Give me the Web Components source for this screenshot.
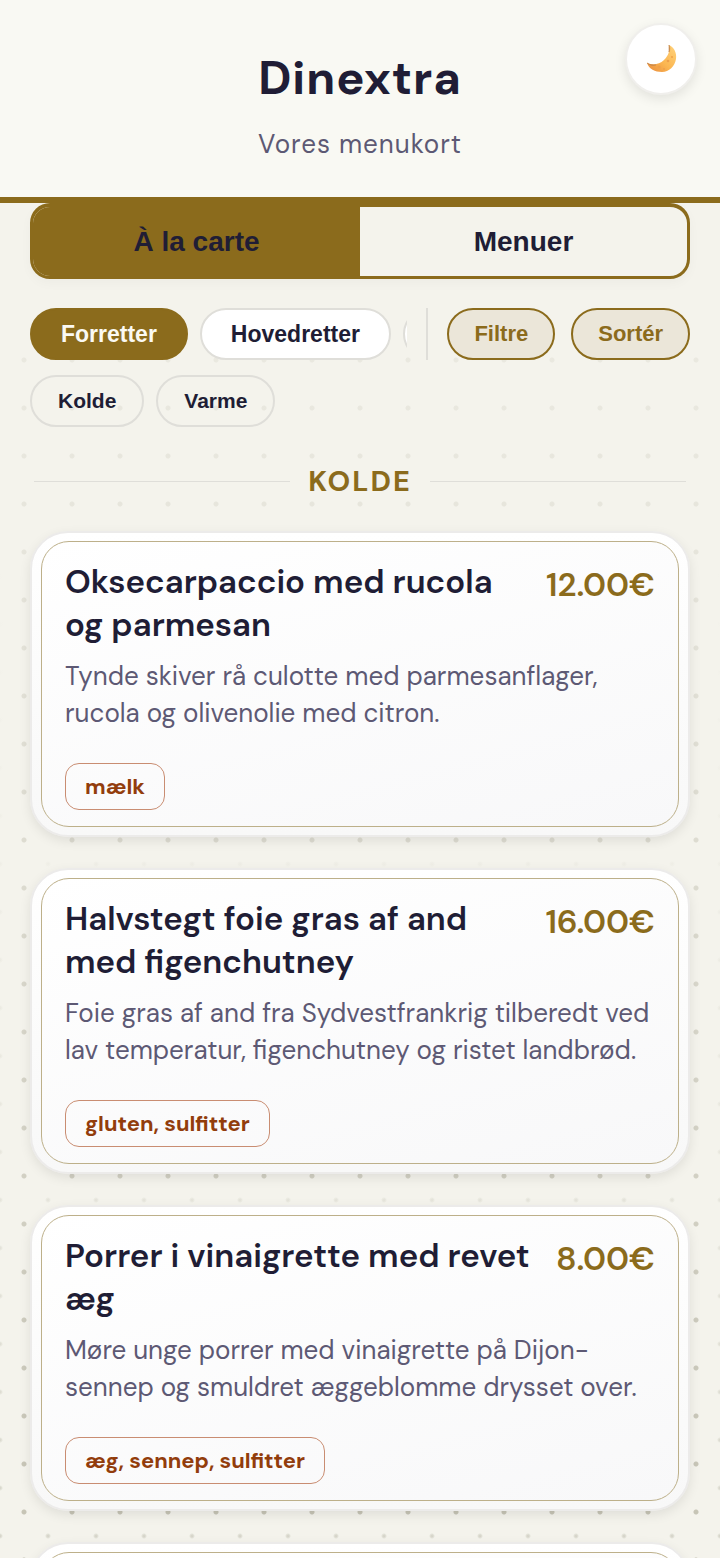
<!DOCTYPE html>
<html lang="da">
<head>
<meta charset="utf-8">
<meta name="viewport" content="width=device-width, initial-scale=1">
<title>Dinextra</title>
<style>
    :root {
        --gold: #8b6b1c;
        --ink: #201d35;
        --muted: #5d5974;
        --paper: #f4f3ec;
        --line: #dfded9;
        --ui: "Liberation Sans", Arial, sans-serif;
    }

    body {
        margin: 0;
        height: 100vh;
        overflow: hidden;
        color: var(--ink);
        background:
            linear-gradient(#f4f3ecee, #f4f3ecaa 40%, #f4f3ec00),
            radial-gradient(circle, #c5c3b4 2px, transparent 3px) 0 0 / 48px 48px,
            linear-gradient(#f4f3ec 35%, #f4f3ec00),
            radial-gradient(circle, #d6d5ca 1px, transparent 3px) 24px 24px / 48px 48px,
            var(--paper);
        font-family: "DM Sans", Inter, sans-serif;
    }
</style>
</head>
<body>

<dx-header name="Dinextra" subtitle="Vores menukort"></dx-header>
<dx-page>
    <dx-tabs slot="bar"></dx-tabs>
    <dx-filters slot="bar"></dx-filters>
    <dx-section name="Kolde">
        <dx-dish name="Oksecarpaccio med rucola og parmesan" price="12.00€" allergens="mælk">Tynde skiver rå culotte med parmesanflager, rucola og olivenolie med citron.</dx-dish>
        <dx-dish name="Halvstegt foie gras af and med figenchutney" price="16.00€" allergens="gluten, sulfitter">Foie gras af and fra Sydvestfrankrig tilberedt ved lav temperatur, figenchutney og ristet landbrød.</dx-dish>
        <dx-dish name="Porrer i vinaigrette med revet æg" price="8.00€" allergens="æg, sennep, sulfitter">Møre unge porrer med vinaigrette på Dijon-sennep og smuldret æggeblomme drysset over.</dx-dish>
        <dx-dish></dx-dish>
    </dx-section>
</dx-page>

<script>
class DXHeader extends HTMLElement {

    constructor() {
        super();
        this.attachShadow({ mode: "open" });
    }

    connectedCallback() {
        const styles = `
            :host {
            display: block;
            position: relative;
            padding: 48px 24px 35px;
            background: #f9f9f3;
            border-bottom: 6px solid var(--gold);
            text-align: center;
            }

            h1 {
            margin: 0;
            font-size: 47px;
            line-height: 60px;
            font-weight: 700;
            letter-spacing: 1px;
            }

            p {
            margin: 18px 0 0;
            font-size: 26px;
            line-height: 36px;
            letter-spacing: 1px;
            color: var(--muted);
            }

            button {
            position: absolute;
            top: 23px;
            right: 23px;
            width: 72px;
            height: 72px;
            padding: 0;
            display: grid;
            place-items: center;
            border: 2px solid #f0efec;
            border-radius: 50%;
            background: #fff;
            box-shadow: 0 4px 12px #00000018;
            }

            svg {
            width: 32px;
            height: 32px;
            }
      `;

        const template = `
            <h1>${this.getAttribute("name")}</h1>
            <p>${this.getAttribute("subtitle")}</p>
            <button type="button" aria-label="Mørkt tema">
                <svg viewBox="0 0 32 32">
                    <defs>
                        <linearGradient id="moon" x1="0" y1="1" x2="1" y2="0">
                            <stop offset="0" stop-color="#e88a3c"/>
                            <stop offset=".45" stop-color="#fbb651"/>
                            <stop offset="1" stop-color="#ffd37c"/>
                        </linearGradient>
                    </defs>
                    <path d="M24 2C29 4 32 10 31 16C30 23 24 29 17 29C10 29 4 26 2 20C7 22 14 22 19 17C24 12 25 7 24 2Z" fill="url(#moon)"/>
                    <path d="M24 2C25 4 25 7 24 9Z M2 20C5 22 8 22 11 22C7 23 4 22 2 20Z" fill="#b47a43" stroke="#c98a4c" stroke-width=".6"/>
                    <g fill="#eea04a">
                        <circle cx="14" cy="24" r="1.5"/>
                        <circle cx="19" cy="26" r="1"/>
                        <circle cx="23" cy="18" r="1.3"/>
                        <circle cx="27" cy="14" r="1"/>
                    </g>
                </svg>
            </button>
      `;

        this.shadowRoot.innerHTML = `
        <style>${styles}</style>
        ${template}
      `;
    }
}
customElements.define("dx-header", DXHeader);

class DXPage extends HTMLElement {

    constructor() {
        super();
        this.attachShadow({ mode: "open" });
    }

    connectedCallback() {
        this.shadowRoot.innerHTML = `
        <style>
            :host {
            display: block;
            }

            .bar {
            padding: 0 30px;
            background: linear-gradient(var(--paper) 148px, transparent 148px);
            }

            main {
            padding: 0 30px;
            }
        </style>
        <div class="bar"><slot name="bar"></slot></div>
        <main><slot></slot></main>
      `;
    }
}
customElements.define("dx-page", DXPage);

class DXTabs extends HTMLElement {

    constructor() {
        super();
        this.attachShadow({ mode: "open" });
    }

    connectedCallback() {
        this.shadowRoot.innerHTML = `
        <style>
            :host {
            display: flex;
            height: 69px;
            border: 3px solid var(--gold);
            border-top-width: 4px;
            border-radius: 20px;
            overflow: hidden;
            box-shadow: 0 4px 12px #00000008;
            }

            button {
            flex: 1;
            border: 0;
            padding: 0;
            background: none;
            color: var(--ink);
            font: 700 28px/32px var(--ui);
            }

            .on {
            background: var(--gold);
            }
        </style>
        <button type="button" class="on">À la carte</button>
        <button type="button">Menuer</button>
      `;
    }
}
customElements.define("dx-tabs", DXTabs);

class DXFilters extends HTMLElement {

    constructor() {
        super();
        this.attachShadow({ mode: "open" });
    }

    connectedCallback() {
        const styles = `
            :host {
            display: block;
            padding-top: 29px;
            }

            .row {
            display: flex;
            height: 52px;
            }

            .courses {
            flex: 1;
            min-width: 0;
            display: flex;
            gap: 12px;
            overflow: hidden;
            }

            .tools {
            display: flex;
            gap: 16px;
            margin-left: 19px;
            padding-left: 19px;
            border-left: 2px solid var(--line);
            }

            .kinds {
            gap: 12px;
            margin-top: 15px;
            }

            button {
            flex: none;
            box-sizing: border-box;
            height: 52px;
            padding: 0 26px;
            border: 2px solid var(--line);
            border-radius: 26px;
            background: none;
            color: var(--ink);
            font: 700 21px/24px var(--ui);
            }

            .courses button {
            padding: 0 29px;
            background: #fff;
            font-size: 23px;
            }

            .courses .on {
            background: var(--gold);
            border-color: var(--gold);
            color: #faf9f3;
            }

            .tools button {
            padding: 0 25px;
            background: #ebe6d9;
            border-color: var(--gold);
            color: var(--gold);
            font-size: 22px;
            }
      `;

        this.shadowRoot.innerHTML = `
        <style>${styles}</style>
        <div class="row">
            <div class="courses">
                <button type="button" class="on">Forretter</button>
                <button type="button">Hovedretter</button>
                <button type="button" aria-label="Desserter"></button>
            </div>
            <div class="tools">
                <button type="button">Filtre</button>
                <button type="button">Sortér</button>
            </div>
        </div>
        <div class="row kinds">
            <button type="button">Kolde</button>
            <button type="button">Varme</button>
        </div>
      `;
    }
}
customElements.define("dx-filters", DXFilters);

class DXSection extends HTMLElement {

    constructor() {
        super();
        this.attachShadow({ mode: "open" });
    }

    connectedCallback() {
        this.shadowRoot.innerHTML = `
        <style>
            :host {
            display: block;
            padding-top: 35px;
            }

            h2 {
            display: flex;
            align-items: center;
            gap: 18px;
            margin: 0 4px 31px;
            color: var(--gold);
            font-size: 29px;
            line-height: 38px;
            font-weight: 700;
            letter-spacing: 2px;
            text-transform: uppercase;
            }

            h2::before, h2::after {
            content: "";
            flex: 1;
            height: 1px;
            background: var(--line);
            }

            .list {
            display: grid;
            gap: 31px;
            }
        </style>
        <h2>${this.getAttribute("name")}</h2>
        <div class="list"><slot></slot></div>
      `;
    }
}
customElements.define("dx-section", DXSection);

class DXDish extends HTMLElement {

    constructor() {
        super();
        this.attachShadow({ mode: "open" });
    }

    connectedCallback() {
        var name = this.getAttribute("name");
        var price = this.getAttribute("price");
        var allergens = this.getAttribute("allergens");

        const styles = `
            :host {
            display: block;
            padding: 8px 9px;
            border: 2px solid #ecebea;
            border-radius: 38px;
            background: linear-gradient(#fff, #f8f8f8);
            box-shadow: 0 4px 12px #00000016;
            }

            article {
            min-height: 240px;
            padding: 18px 23px 16px;
            border: 1px solid #bdb08a;
            border-radius: 28px;
            background: linear-gradient(165deg, #fff, #f8f8f9);
            }

            .top {
            display: flex;
            justify-content: space-between;
            gap: 24px;
            }

            h3 {
            margin: 0;
            font-size: 33px;
            line-height: 43px;
            font-weight: 600;
            }

            .price {
            color: var(--gold);
            font-size: 33px;
            line-height: 49px;
            font-weight: 600;
            white-space: nowrap;
            }

            p {
            margin: 12px 0 31px;
            color: var(--muted);
            font-size: 26px;
            line-height: 37px;
            }

            .tag {
            display: inline-block;
            vertical-align: top;
            padding: 0 19px;
            border: 1px solid #c98d72;
            border-radius: 14px;
            color: #923d0c;
            font-size: 22px;
            line-height: 45px;
            font-weight: 700;
            }
      `;

        const template = name === null ? "" : `
            <div class="top">
                <h3>${name}</h3>
                <span class="price">${price}</span>
            </div>
            <p><slot></slot></p>
            <span class="tag">${allergens}</span>
      `;

        this.shadowRoot.innerHTML = `
        <style>${styles}</style>
        <article>${template}</article>
      `;
    }
}
customElements.define("dx-dish", DXDish);
</script>
</body>
</html>
